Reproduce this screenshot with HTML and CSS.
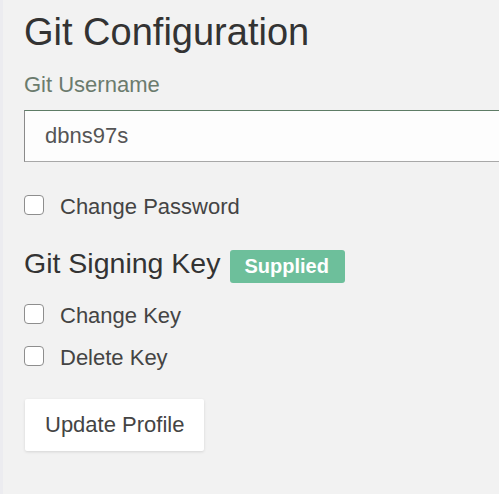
FILE: index.html
```html
<!DOCTYPE html>
<html lang="en">
<head>
<meta charset="utf-8">
<title>Git Configuration</title>
<link rel="stylesheet" href="styles.css">
</head>
<body>
<main class="panel">
  <h1 class="title">Git Configuration</h1>
  <label class="field-label" for="git-user">Git Username</label>
  <div class="input-wrap"><input class="text-input" id="git-user" type="text" value="dbns97s"></div>
  <label class="check-row row-password"><input type="checkbox" class="check"><span>Change Password</span></label>
  <h2 class="subtitle">Git Signing Key <span class="badge">Supplied</span></h2>
  <label class="check-row row-key"><input type="checkbox" class="check"><span>Change Key</span></label>
  <label class="check-row row-delete"><input type="checkbox" class="check"><span>Delete Key</span></label>
  <button class="btn" type="button">Update Profile</button>
</main>
</body>
</html>
```
FILE: styles.css
```css
html, body {
  margin: 0;
  padding: 0;
  overflow: hidden;
  background: #f2f2f2;
}
body {
  font-family: "Liberation Sans", Arial, sans-serif;
  color: #444;
}
.panel {
  display: flex;
  flex-direction: column;
  align-items: flex-start;
  border-left: 3px solid #ececf0;
  padding: 10px 0 40px 21px;
  min-height: 494px;
  box-sizing: border-box;
}
.title {
  margin: 0;
  font-size: 38px;
  line-height: 44px;
  font-weight: 400;
  color: #333;
}
.field-label {
  margin-top: 18px;
  font-size: 22px;
  line-height: 26px;
  color: #6b7b6d;
}
.input-wrap {
  margin-top: 12px;
  align-self: stretch;
  overflow: hidden;
}
.text-input {
  display: block;
  width: calc(100% + 4px);
  height: 52px;
  box-sizing: border-box;
  padding: 0 20px;
  border: 1px solid #8a8a8a;
  border-top-color: #5e7c66;
  border-bottom-color: #a8a8a8;
  border-radius: 0;
  background: #fdfdfd;
  font-family: "Liberation Sans", Arial, sans-serif;
  font-size: 22px;
  color: #555;
  outline: none;
}
.check-row {
  display: flex;
  align-items: flex-start;
  gap: 16px;
  font-size: 22px;
  line-height: 26px;
  color: #444;
}
.row-password { margin-top: 32px; }
.row-key { margin-top: 20px; }
.row-delete { margin-top: 16px; }
.check {
  appearance: none;
  -webkit-appearance: none;
  margin: 1px 0 0 0;
  width: 20px;
  height: 20px;
  box-sizing: border-box;
  border: 1.5px solid #8e8e8e;
  border-radius: 4px;
  background: #fff;
}
.subtitle {
  margin: 26px 0 0 0;
  display: flex;
  align-items: baseline;
  gap: 10px;
  font-size: 28.5px;
  line-height: 34px;
  font-weight: 400;
  color: #333;
}
.badge {
  display: inline-block;
  padding: 6px 16px 7px 14px;
  font-size: 20px;
  line-height: 20px;
  font-weight: 700;
  color: #fff;
  background: #6dbf9b;
  border-radius: 3px;
}
.btn {
  margin-top: 28px;
  margin-left: 1px;
  padding: 13px 20px;
  font-family: "Liberation Sans", Arial, sans-serif;
  font-size: 22px;
  line-height: 26px;
  color: #444;
  background: #fff;
  border: none;
  border-radius: 2px;
  box-shadow: 0 1px 3px rgba(0,0,0,0.12);
}
```
